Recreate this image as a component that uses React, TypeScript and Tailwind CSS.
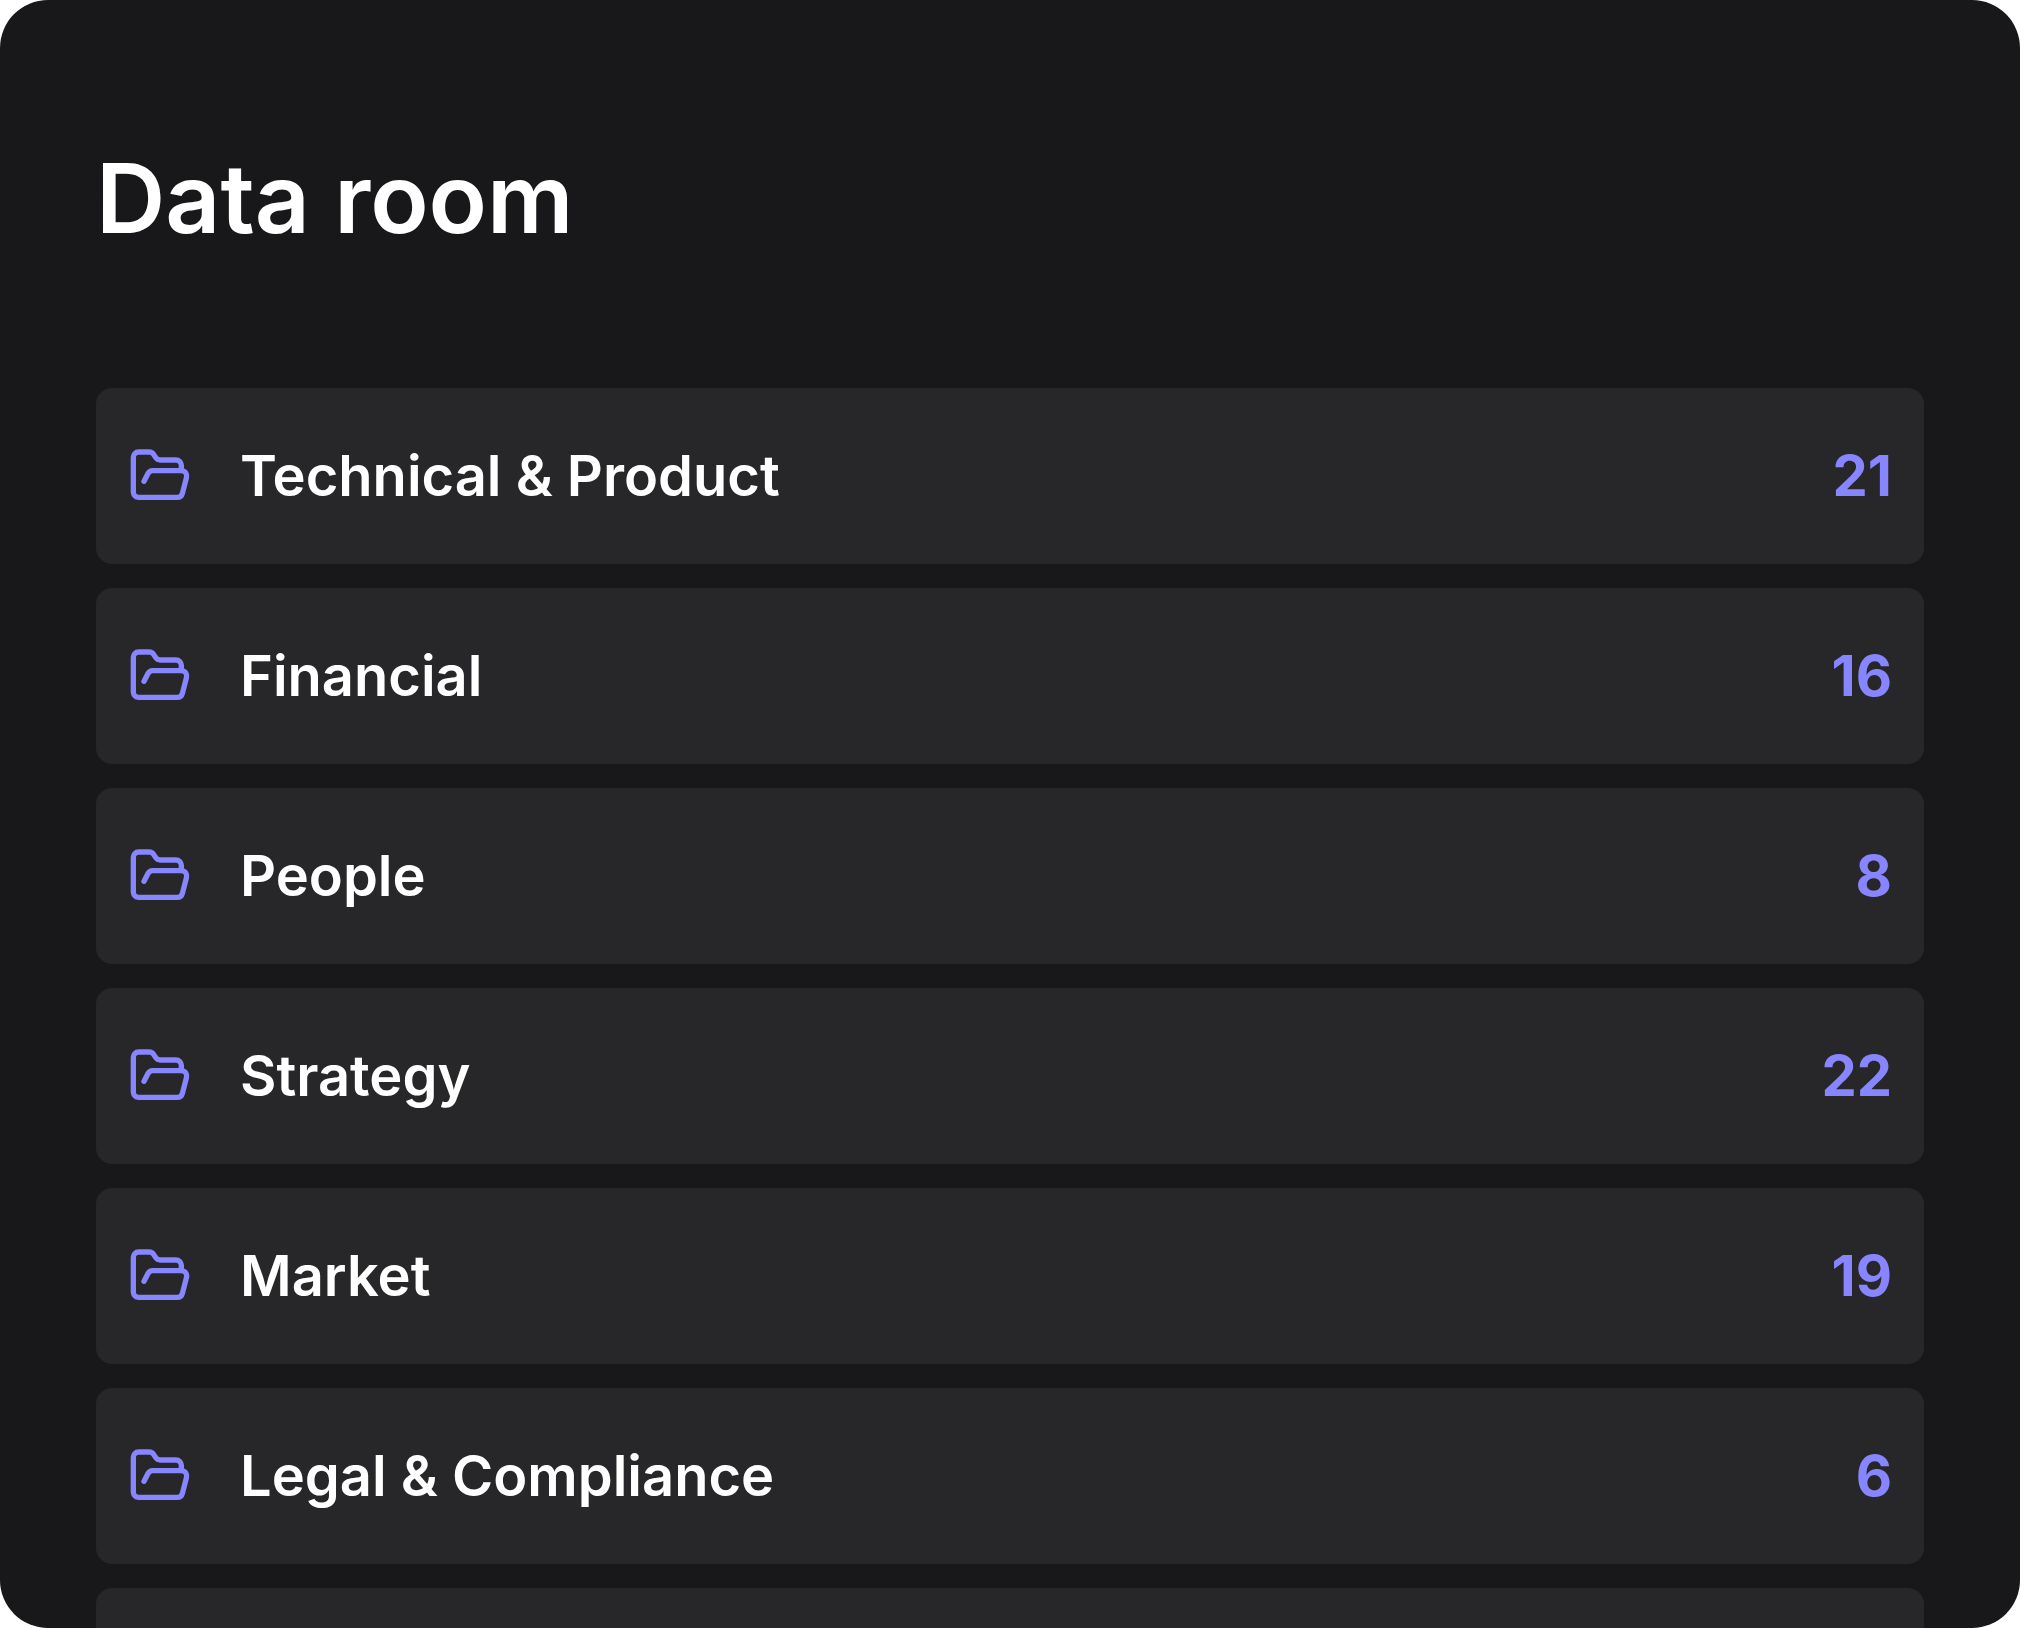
import React from "react";
import { FolderOpen } from "lucide-react";

const folders = [
  { name: "Technical & Product", count: 21 },
  { name: "Financial", count: 16 },
  { name: "People", count: 8 },
  { name: "Strategy", count: 22 },
  { name: "Market", count: 19 },
  { name: "Legal & Compliance", count: 6 },
];

const FolderRow = ({ name, count }: { name: string; count: number }) => {
  return (
    <li>
      <a
        href="#"
        className="flex h-44 items-center gap-12 rounded-2xl bg-[#272729] px-8 text-[56px] leading-[72px] font-semibold text-white"
      >
        <FolderOpen className="size-16 shrink-0 text-[#8785ff]" />
        <span className="grow truncate">{name}</span>
        <span className="font-bold text-[#8785ff]">{count}</span>
      </a>
    </li>
  );
};

const App = () => {
  return (
    <div className="bg-white">
      <main className="h-screen overflow-hidden rounded-[48px] bg-[#18181a] px-24 pt-32 font-['Inter',sans-serif]">
        <h1 className="text-8xl leading-[140px] font-semibold text-white">
          Data room
        </h1>
        <ul className="mt-30 flex flex-col gap-6">
          {folders.map((folder) => (
            <FolderRow key={folder.name} {...folder} />
          ))}
          {/* the list runs on under the panel's bottom edge */}
          <li aria-hidden="true" className="h-44 rounded-2xl bg-[#272729]" />
        </ul>
      </main>
    </div>
  );
};

export default App;
